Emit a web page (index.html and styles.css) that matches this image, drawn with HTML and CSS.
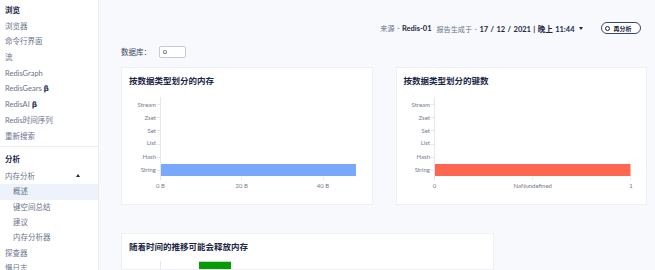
FILE: index.html
```html
<!DOCTYPE html>
<html lang="zh">
<head>
<meta charset="utf-8">
<title>内存分析 - 概述</title>
<link rel="stylesheet" href="styles.css">
</head>
<body>
<div class="app">
  <aside class="sidebar">
    <div class="nav-section">
      <div class="nav-head">浏览</div>
      <div class="nav-item">浏览器</div>
      <div class="nav-item">命令行界面</div>
      <div class="nav-item">流</div>
      <div class="nav-item">RedisGraph</div>
      <div class="nav-item">RedisGears <b class="beta">β</b></div>
      <div class="nav-item">RedisAI <b class="beta">β</b></div>
      <div class="nav-item">Redis时间序列</div>
      <div class="nav-item">重新搜索</div>
    </div>
    <div class="nav-section second">
      <div class="nav-head">分析</div>
      <div class="nav-item parent">内存分析 <span class="tri"></span></div>
      <div class="nav-item sub active">概述</div>
      <div class="nav-item sub">键空间总结</div>
      <div class="nav-item sub">建议</div>
      <div class="nav-item sub">内存分析器</div>
      <div class="nav-item">探查器</div>
      <div class="nav-item">慢日志</div>
    </div>
  </aside>
  <main class="main">
    <div class="topbar">
      <span class="meta">来源 - <b>Redis-01</b></span>
      <span class="meta">报告生成于 - <b>17 / 12 / 2021 | 晚上 11:44</b></span>
      <span class="caret"></span>
      <button class="btn"><span class="ring"></span>再分析</button>
    </div>
    <div class="db-row">
      <span class="db-label">数据库：</span>
      <span class="db-input">0</span>
    </div>
    <div class="cards">
      <section class="card">
        <h2 class="card-title">按数据类型划分的内存</h2>
        <svg class="chart" viewBox="0 0 251 114" width="251" height="114">
          <line x1="38.5" y1="6" x2="38.5" y2="86" stroke="#e4e7ed" stroke-width="1"/>
          <g stroke="#e4e7ed" stroke-width="1">
            <line x1="35" y1="13.5" x2="38.5" y2="13.5"/>
            <line x1="35" y1="26.5" x2="38.5" y2="26.5"/>
            <line x1="35" y1="39.5" x2="38.5" y2="39.5"/>
            <line x1="35" y1="53.5" x2="38.5" y2="53.5"/>
            <line x1="35" y1="66.5" x2="38.5" y2="66.5"/>
            <line x1="35" y1="79.5" x2="38.5" y2="79.5"/>
            <line x1="38.5" y1="86" x2="38.5" y2="89"/>
            <line x1="119.5" y1="86" x2="119.5" y2="89"/>
            <line x1="201.5" y1="86" x2="201.5" y2="89"/>
          </g>
          <g class="ax-label" text-anchor="end">
            <text x="34" y="15.9">Stream</text>
            <text x="34" y="29.2">Zset</text>
            <text x="34" y="41.9">Set</text>
            <text x="34" y="54.2">List</text>
            <text x="34" y="68.2">Hash</text>
            <text x="34" y="81.2">String</text>
          </g>
          <rect x="39" y="73" width="195" height="12" fill="#78a8f9"/>
          <g class="ax-label" text-anchor="middle">
            <text x="38.5" y="96.9">0 B</text>
            <text x="119.7" y="96.9">20 B</text>
            <text x="201" y="96.9">40 B</text>
          </g>
        </svg>
      </section>
      <section class="card">
        <h2 class="card-title">按数据类型划分的键数</h2>
        <svg class="chart" viewBox="0 0 251 114" width="251" height="114">
          <line x1="37.5" y1="6" x2="37.5" y2="86" stroke="#e4e7ed" stroke-width="1"/>
          <g stroke="#e4e7ed" stroke-width="1">
            <line x1="34" y1="13.5" x2="37.5" y2="13.5"/>
            <line x1="34" y1="26.5" x2="37.5" y2="26.5"/>
            <line x1="34" y1="39.5" x2="37.5" y2="39.5"/>
            <line x1="34" y1="53.5" x2="37.5" y2="53.5"/>
            <line x1="34" y1="66.5" x2="37.5" y2="66.5"/>
            <line x1="34" y1="79.5" x2="37.5" y2="79.5"/>
            <line x1="37.5" y1="86" x2="37.5" y2="89"/>
            <line x1="135.5" y1="86" x2="135.5" y2="89"/>
            <line x1="233.5" y1="86" x2="233.5" y2="89"/>
          </g>
          <g class="ax-label" text-anchor="end">
            <text x="33" y="15.9">Stream</text>
            <text x="33" y="29.2">Zset</text>
            <text x="33" y="41.9">Set</text>
            <text x="33" y="54.2">List</text>
            <text x="33" y="68.2">Hash</text>
            <text x="33" y="81.2">String</text>
          </g>
          <rect x="38" y="73" width="195.5" height="12" fill="#fd6651"/>
          <g class="ax-label" text-anchor="middle">
            <text x="37.5" y="96.9">0</text>
            <text x="135.7" y="96.9">NaNundefined</text>
            <text x="234" y="96.9">1</text>
          </g>
        </svg>
      </section>
    </div>
    <section class="card card-wide">
      <h2 class="card-title">随着时间的推移可能会释放内存</h2>
      <svg class="chart" viewBox="0 0 373 40" width="373" height="40">
        <line x1="38.5" y1="4" x2="38.5" y2="40" stroke="#e4e7ed" stroke-width="1"/>
        <rect x="77" y="4.7" width="32" height="36" fill="#089b08"/>
      </svg>
    </section>
  </main>
</div>
</body>
</html>
```

FILE: styles.css
```css
* { box-sizing: border-box; }

html, body {
  margin: 0;
  padding: 0;
}

body {
  font-family: "Lato", "Noto Sans CJK SC", sans-serif;
  color: #1c2746;
  background: #f8f9fd;
  width: 655px;
  height: 270px;
  overflow: hidden;
}

.app {
  display: flex;
  height: 270px;
  overflow: hidden;
}

/* Sidebar */
.sidebar {
  width: 99px;
  flex: 0 0 99px;
  background: #ffffff;
  border-right: 1px solid #e9ecf2;
  padding-top: 3px;
}

.nav-section {
  display: flex;
  flex-direction: column;
}

.nav-section.second {
  border-top: 1px solid #eceef3;
  margin-top: 1.5px;
  padding-top: 5.5px;
}

.nav-head,
.nav-item {
  height: 15.7px;
  line-height: 15.7px;
  font-size: 7.5px;
  padding-left: 5px;
  white-space: nowrap;
}

.second .nav-head,
.second .nav-item {
  height: 15.4px;
  line-height: 15.4px;
}

.nav-head {
  font-weight: 700;
  color: #1c2746;
}

.second .nav-head {
  margin-bottom: 1.2px;
}

.nav-item {
  color: #6a748b;
}

.beta {
  font-family: "DejaVu Sans", sans-serif;
  color: #2a3657;
  font-weight: 700;
  font-size: 7.5px;
}

.parent {
  display: flex;
  align-items: center;
  justify-content: space-between;
  padding-right: 18px;
}

.tri {
  width: 0;
  height: 0;
  border-left: 2.5px solid transparent;
  border-right: 2.5px solid transparent;
  border-bottom: 3px solid #1c2746;
  margin-top: -1px;
}

.sub {
  padding-left: 13px;
}

.active {
  background: #eef3fb;
}

/* Main */
.main {
  flex: 1;
  padding: 22px 8px 0 22px;
  display: flex;
  flex-direction: column;
}

.topbar {
  display: flex;
  align-items: center;
  justify-content: flex-end;
  height: 12px;
  margin-right: 6px;
  font-size: 7.1px;
  white-space: nowrap;
}

.meta {
  color: #6a748b;
  margin-right: 5px;
  word-spacing: 0.6px;
}

.meta b {
  color: #1c2746;
  font-weight: 700;
  font-size: 7.5px;
}

.caret {
  flex: 0 0 auto;
  width: 0;
  height: 0;
  border-left: 2.5px solid transparent;
  border-right: 2.5px solid transparent;
  border-top: 3.5px solid #1c2746;
  margin-left: -1px;
  margin-right: 18px;
}

.btn {
  flex: 0 0 auto;
  display: flex;
  align-items: center;
  gap: 4px;
  height: 12px;
  width: 40.5px;
  padding: 0 0 0 3px;
  border: 1px solid #3a4666;
  border-radius: 7px;
  background: #ffffff;
  font-family: inherit;
  font-size: 6px;
  font-weight: 700;
  color: #1c2746;
}

.ring {
  width: 5px;
  height: 5px;
  border: 1px solid #1c2746;
  border-radius: 50%;
}

.db-row {
  display: flex;
  align-items: center;
  height: 12px;
  margin-top: 11.5px;
  font-size: 7.5px;
  color: #3a4563;
}

.db-label {
  width: 38px;
}

.db-input {
  width: 27px;
  height: 12px;
  line-height: 10px;
  border: 1px solid #c5cad4;
  border-radius: 2px;
  background: #ffffff;
  font-size: 6.5px;
  padding-left: 3px;
  color: #1c2746;
}

.cards {
  display: grid;
  grid-template-columns: 1fr 1fr;
  gap: 23px;
  margin-top: 9.5px;
}

.card {
  background: #ffffff;
  border: 1px solid #eef0f6;
  height: 138px;
  overflow: hidden;
}

.card-title {
  margin: 0;
  padding: 8px 0 0 7px;
  height: 23px;
  line-height: 10px;
  font-size: 8.5px;
  font-weight: 700;
  color: #1c2746;
}

.chart {
  display: block;
}

.ax-label {
  font-size: 6px;
  fill: #737b8c;
  font-family: "Lato", sans-serif;
}

.card-wide {
  width: 373px;
  height: 70px;
  margin-top: 28px;
}
```
